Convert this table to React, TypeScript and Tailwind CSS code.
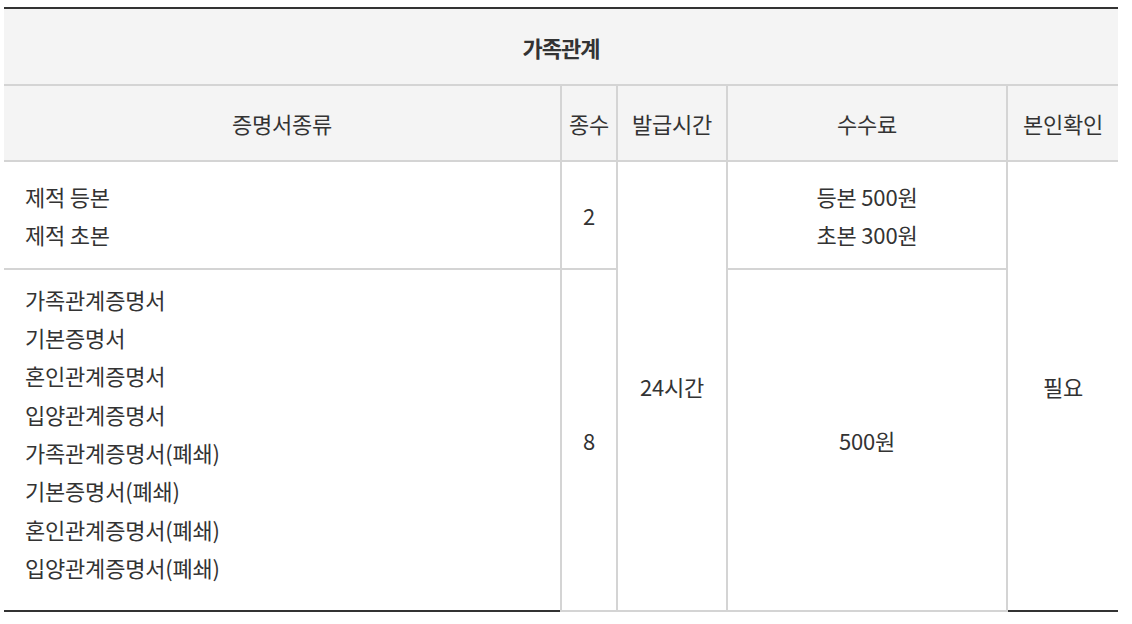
import React from "react";

const bd = "border-2 border-[#d4d4d4]";

export default function App() {
  const docs = [
    "가족관계증명서",
    "기본증명서",
    "혼인관계증명서",
    "입양관계증명서",
    "가족관계증명서(폐쇄)",
    "기본증명서(폐쇄)",
    "혼인관계증명서(폐쇄)",
    "입양관계증명서(폐쇄)",
  ];
  return (
    <div
      className="w-[1132px] h-[624px] bg-white pt-[7px] pl-[4px] text-[#333] text-[22px] tracking-[-0.2px]"
      style={{ fontFamily: '"Noto Sans CJK KR", "Noto Sans", sans-serif' }}
    >
      <table className="w-[1114px] table-fixed border-collapse border-t-2 border-b-2 border-t-[#333] border-b-[#333]">
        <colgroup>
          <col className="w-[557px]" />
          <col className="w-[56px]" />
          <col className="w-[110px]" />
          <col className="w-[280px]" />
          <col className="w-[111px]" />
        </colgroup>
        <thead>
          <tr className="bg-[#f4f4f4]">
            <th colSpan={5} className="h-[77px] border-b-2 border-b-[#d4d4d4] font-bold text-center leading-[38px] tracking-[-1px]">
              가족관계
            </th>
          </tr>
          <tr className="bg-[#f4f4f4]">
            <th className="h-[76px] font-normal text-center border-b-2 border-r-2 border-[#d4d4d4]">증명서종류</th>
            <th className={`font-normal text-center ${bd}`}>종수</th>
            <th className={`font-normal text-center ${bd}`}>발급시간</th>
            <th className={`font-normal text-center ${bd}`}>수수료</th>
            <th className="font-normal text-center border-b-2 border-l-2 border-[#d4d4d4]">본인확인</th>
          </tr>
        </thead>
        <tbody className="leading-[38.3px]">
          <tr>
            <td className="h-[108px] pl-[21px] border-b-2 border-r-2 border-[#d4d4d4]">
              <div>제적 등본</div>
              <div>제적 초본</div>
            </td>
            <td className={`text-center ${bd}`}>2</td>
            <td rowSpan={2} className={`text-center ${bd}`}>24시간</td>
            <td className={`text-center ${bd}`}>
              <div>등본 500원</div>
              <div>초본 300원</div>
            </td>
            <td rowSpan={2} className="text-center border-l-2 border-[#d4d4d4]">필요</td>
          </tr>
          <tr>
            <td className="h-[342px] pl-[21px] pb-[14px] border-r-2 border-[#d4d4d4]">
              {docs.map((d) => (
                <div key={d}>{d}</div>
              ))}
            </td>
            <td className={`text-center ${bd}`}>8</td>
            <td className={`text-center ${bd}`}>500원</td>
          </tr>
        </tbody>
      </table>
    </div>
  );
}
